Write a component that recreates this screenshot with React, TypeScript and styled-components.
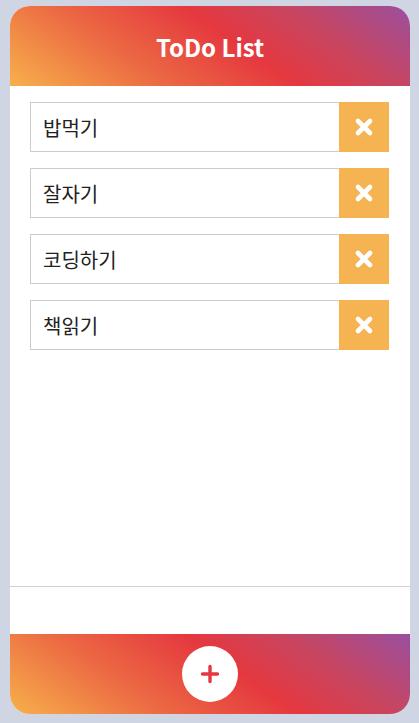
import React from "react";
import styled, { createGlobalStyle } from "styled-components";

const GlobalStyle = createGlobalStyle`
  html, body { margin: 0; padding: 0; }
  body {
    background: #d0d5e3;
    font-family: "Noto Sans CJK KR", "Noto Sans", sans-serif;
  }
`;

const gradient = "linear-gradient(35deg, #f7b04b 0%, #ec6a43 30%, #e5383f 56%, #c9455f 75%, #9a4f9f 100%)";

const Page = styled.div`
  padding: 6px 9px 9px 10px;
`;

const Card = styled.div`
  width: 400px;
  height: 708px;
  background: #fff;
  border-radius: 20px;
  overflow: hidden;
  display: flex;
  flex-direction: column;
`;

const Header = styled.header`
  height: 80px;
  flex: none;
  background: ${gradient};
  display: flex;
  align-items: center;
  justify-content: center;
`;

const Title = styled.h1`
  margin: 0;
  color: #fff;
  font-size: 24px;
  font-weight: 700;
  line-height: 1;
  padding-top: 2px;
`;

const List = styled.ul`
  list-style: none;
  margin: 0;
  padding: 16px 21px 0 20px;
  flex: 1;
  display: flex;
  flex-direction: column;
  gap: 16px;
  border-bottom: 1px solid #cfcfd4;
`;

const Row = styled.li`
  display: flex;
  height: 50px;
`;

const ItemInput = styled.input`
  flex: 1;
  min-width: 0;
  box-sizing: border-box;
  height: 50px;
  border: 1px solid #cccccc;
  border-right: none;
  padding: 0 12px;
  font-family: inherit;
  font-size: 20px;
  color: #222;
  outline: none;
  background: #fff;
`;

const DeleteButton = styled.button`
  width: 50px;
  height: 50px;
  border: none;
  padding: 0;
  background: #f6b352;
  color: #fff;
  display: flex;
  align-items: center;
  justify-content: center;
  cursor: pointer;
`;

const Spacer = styled.div`
  height: 47px;
  flex: none;
`;

const Footer = styled.footer`
  height: 80px;
  flex: none;
  background: ${gradient};
  display: flex;
  align-items: center;
  justify-content: center;
`;

const AddButton = styled.button`
  width: 56px;
  height: 56px;
  border-radius: 50%;
  border: none;
  padding: 0;
  background: #fff;
  color: #e4373f;
  display: flex;
  align-items: center;
  justify-content: center;
  cursor: pointer;
`;

const CrossIcon = () => (
  <svg width="20" height="20" viewBox="0 0 20 20" aria-hidden="true">
    <path d="M4 4 L16 16 M16 4 L4 16" stroke="currentColor" strokeWidth="4.6" strokeLinecap="round" fill="none" />
  </svg>
);

const PlusIcon = () => (
  <svg width="20" height="20" viewBox="0 0 20 20" aria-hidden="true">
    <path d="M10 2.5 V17.5 M2.5 10 H17.5" stroke="currentColor" strokeWidth="3.4" strokeLinecap="round" fill="none" />
  </svg>
);

const todos = ["밥먹기", "잘자기", "코딩하기", "책읽기"];

export default function App() {
  return (
    <>
      <GlobalStyle />
      <Page>
        <Card>
          <Header>
            <Title>ToDo List</Title>
          </Header>
          <List>
            {todos.map((t) => (
              <Row key={t}>
                <ItemInput defaultValue={t} readOnly />
                <DeleteButton aria-label="삭제">
                  <CrossIcon />
                </DeleteButton>
              </Row>
            ))}
          </List>
          <Spacer />
          <Footer>
            <AddButton aria-label="추가">
              <PlusIcon />
            </AddButton>
          </Footer>
        </Card>
      </Page>
    </>
  );
}
